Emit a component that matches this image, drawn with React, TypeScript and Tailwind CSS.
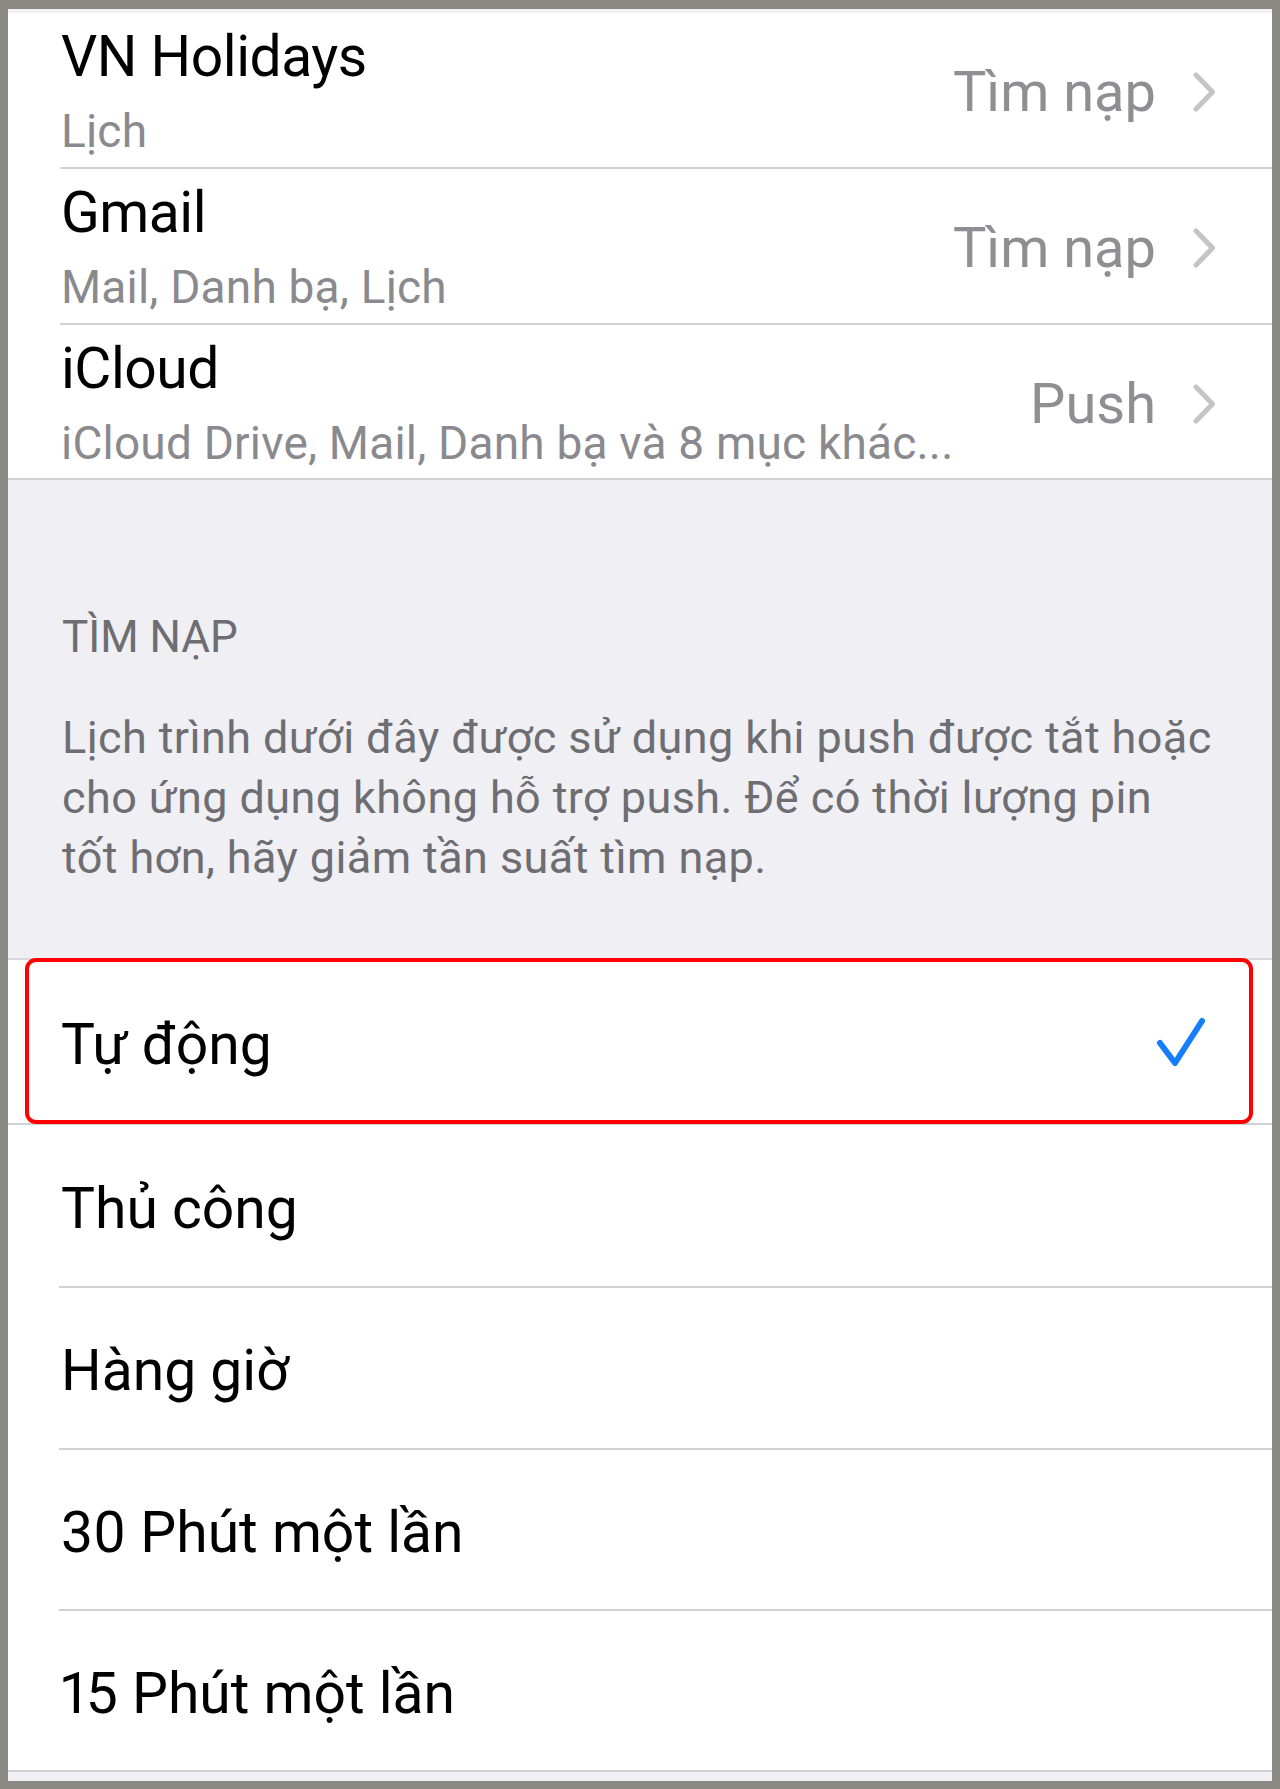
import React from "react";

type AccountProps = {
  title: string;
  subtitle: string;
  value: string;
  rowClass: string;
};

function Chevron() {
  return (
    <svg width="24" height="40" viewBox="0 0 24 40" className="shrink-0">
      <polyline
        points="3,3 19.5,20 3,37"
        fill="none"
        stroke="#c4c4c7"
        strokeWidth="5"
        strokeLinecap="round"
        strokeLinejoin="round"
      />
    </svg>
  );
}

function AccountRow({ title, subtitle, value, rowClass }: AccountProps) {
  return (
    <div className={`flex items-center bg-white pl-[53px] pr-[55px] ${rowClass}`}>
      <div className="flex min-w-0 flex-1 flex-col self-start pt-[12px]">
        <div className="text-[57px] leading-[64px] tracking-[-0.5px] text-black whitespace-nowrap">
          {title}
        </div>
        <div className="mt-[14px] truncate text-[46px] leading-[56px] tracking-[0.2px] text-[#8a8a8e]">
          {subtitle}
        </div>
      </div>
      <div className="mt-[4px] flex shrink-0 items-center gap-[37px] pl-[40px]">
        <span className="text-[56px] leading-[64px] text-[#8e8e93]">{value}</span>
        <Chevron />
      </div>
    </div>
  );
}

type OptionProps = {
  label: string;
  rowClass: string;
  checked?: boolean;
};

function OptionRow({ label, rowClass, checked }: OptionProps) {
  return (
    <div className={`relative flex items-center bg-white pl-[53px] pr-[67px] pt-[6px] ${rowClass}`}>
      <span className="text-[57px] leading-[64px] text-black proportional-nums">{label}</span>
      {checked && (
        <svg width="50" height="50" viewBox="0 0 50 50" className="ml-auto -mt-[5px]">
          <polyline
            points="5,26 20,46 47,4"
            fill="none"
            stroke="#157efb"
            strokeWidth="6"
            strokeLinecap="round"
            strokeLinejoin="round"
          />
        </svg>
      )}
      {checked && (
        <div className="pointer-events-none absolute left-[17px] right-[19px] top-[-2px] bottom-[-1px] rounded-[11px] border-[4px] border-[#ff0000]" />
      )}
    </div>
  );
}

export default function App() {
  return (
    <div className="h-[1789px] w-[1280px] bg-[#8b8783] px-[8px] pt-[9px] pb-[8px] [font-family:Roboto,'Liberation_Sans',sans-serif]">
      <div className="flex h-full flex-col bg-[#efeff4]">
        <div className="h-[4px] shrink-0" />

        {/* accounts */}
        <div className="flex shrink-0 flex-col bg-white">
          <AccountRow title="VN Holidays" subtitle="Lịch" value="Tìm nạp" rowClass="h-[154px]" />
          <div className="ml-[52px] h-[2px] bg-[#d1d1d5]" />
          <AccountRow
            title="Gmail"
            subtitle="Mail, Danh bạ, Lịch"
            value="Tìm nạp"
            rowClass="h-[154px]"
          />
          <div className="ml-[52px] h-[2px] bg-[#d1d1d5]" />
          <AccountRow
            title="iCloud"
            subtitle="iCloud Drive, Mail, Danh bạ và 8 mục khác..."
            value="Push"
            rowClass="h-[153px]"
          />
        </div>
        <div className="h-[2px] shrink-0 bg-[#d1d1d5]" />

        {/* fetch schedule header */}
        <div className="flex h-[478px] shrink-0 flex-col pl-[54px] pr-[20px] pt-[131px]">
          <div className="text-[44px] leading-[52px] text-[#6d6d72]">TÌM NẠP</div>
          <div className="mt-[45px] text-[45px] leading-[60px] tracking-[0.4px] text-[#6d6d72]">
            <div className="whitespace-nowrap">Lịch trình dưới đây được sử dụng khi push được tắt hoặc</div>
            <div className="whitespace-nowrap">cho ứng dụng không hỗ trợ push. Để có thời lượng pin</div>
            <div className="whitespace-nowrap">tốt hơn, hãy giảm tần suất tìm nạp.</div>
          </div>
        </div>
        <div className="h-[2px] shrink-0 bg-[#d8d8dc]" />

        {/* fetch options */}
        <div className="flex shrink-0 flex-col bg-white">
          <OptionRow label="Tự động" rowClass="h-[163px]" checked />
          <div className="h-[2px] bg-[#d1d1d5]" />
          <OptionRow label="Thủ công" rowClass="h-[161px]" />
          <div className="ml-[51px] h-[2px] bg-[#d1d1d5]" />
          <OptionRow label="Hàng giờ" rowClass="h-[160px]" />
          <div className="ml-[51px] h-[2px] bg-[#d1d1d5]" />
          <OptionRow label="30 Phút một lần" rowClass="h-[159px]" />
          <div className="ml-[51px] h-[2px] bg-[#d1d1d5]" />
          <OptionRow label="15 Phút một lần" rowClass="h-[159px]" />
        </div>
        <div className="h-[2px] shrink-0 bg-[#d1d1d5]" />
        <div className="flex-1" />
      </div>
    </div>
  );
}
